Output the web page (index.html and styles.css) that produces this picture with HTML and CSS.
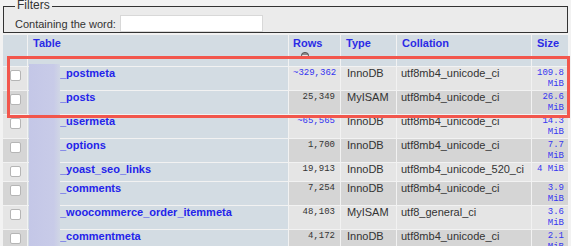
FILE: index.html
```html
<!DOCTYPE html>
<html lang="en">
<head>
<meta charset="utf-8">
<title>Tables</title>
<link rel="stylesheet" href="styles.css">
</head>
<body>
<div class="page">
  <fieldset class="filters">
    <legend>Filters</legend>
    <label class="filter-label">Containing the word: <input class="filter-input" type="text"></label>
  </fieldset>
  <table class="tbl">
    <thead>
      <tr>
        <th class="c-chk"></th>
        <th class="c-name"><a href="#">Table</a></th>
        <th class="c-rows"><a href="#">Rows</a>
          <span class="sort-icon"><svg width="8" height="7" viewBox="0 0 8 7"><ellipse cx="4" cy="3.5" rx="3.6" ry="3.1" fill="#8a8a8a" stroke="#444" stroke-width="0.8"/><rect x="1.2" y="3" width="5.6" height="1" fill="#e6e6e6"/></svg></span>
        </th>
        <th class="c-type"><a href="#">Type</a></th>
        <th class="c-coll"><a href="#">Collation</a></th>
        <th class="c-size"><a href="#">Size</a></th>
      </tr>
    </thead>
    <tbody>
      <tr class="odd">
        <td class="c-chk"><span class="chk"></span></td>
        <th class="c-name"><a href="#">_postmeta</a></th>
        <td class="c-rows"><a href="#">~329,362</a></td>
        <td class="c-type">InnoDB</td>
        <td class="c-coll">utf8mb4_unicode_ci</td>
        <td class="c-size"><a href="#">109.8 MiB</a></td>
      </tr>
      <tr class="even">
        <td class="c-chk"><span class="chk"></span></td>
        <th class="c-name"><a href="#">_posts</a></th>
        <td class="c-rows">25,349</td>
        <td class="c-type">MyISAM</td>
        <td class="c-coll">utf8mb4_unicode_ci</td>
        <td class="c-size"><a href="#">26.6 MiB</a></td>
      </tr>
      <tr class="odd">
        <td class="c-chk"><span class="chk"></span></td>
        <th class="c-name"><a href="#">_usermeta</a></th>
        <td class="c-rows"><a href="#">~65,565</a></td>
        <td class="c-type">InnoDB</td>
        <td class="c-coll">utf8mb4_unicode_ci</td>
        <td class="c-size"><a href="#">14.3 MiB</a></td>
      </tr>
      <tr class="even">
        <td class="c-chk"><span class="chk"></span></td>
        <th class="c-name"><a href="#">_options</a></th>
        <td class="c-rows">1,700</td>
        <td class="c-type">InnoDB</td>
        <td class="c-coll">utf8mb4_unicode_ci</td>
        <td class="c-size"><a href="#">7.7 MiB</a></td>
      </tr>
      <tr class="odd">
        <td class="c-chk"><span class="chk"></span></td>
        <th class="c-name"><a href="#">_yoast_seo_links</a></th>
        <td class="c-rows">19,913</td>
        <td class="c-type">InnoDB</td>
        <td class="c-coll">utf8mb4_unicode_520_ci</td>
        <td class="c-size"><a href="#">4&nbsp;MiB</a></td>
      </tr>
      <tr class="even">
        <td class="c-chk"><span class="chk"></span></td>
        <th class="c-name"><a href="#">_comments</a></th>
        <td class="c-rows">7,254</td>
        <td class="c-type">InnoDB</td>
        <td class="c-coll">utf8mb4_unicode_ci</td>
        <td class="c-size"><a href="#">3.9 MiB</a></td>
      </tr>
      <tr class="odd">
        <td class="c-chk"><span class="chk"></span></td>
        <th class="c-name"><a href="#">_woocommerce_order_itemmeta</a></th>
        <td class="c-rows">48,103</td>
        <td class="c-type">MyISAM</td>
        <td class="c-coll">utf8_general_ci</td>
        <td class="c-size"><a href="#">3.6 MiB</a></td>
      </tr>
      <tr class="even">
        <td class="c-chk"><span class="chk"></span></td>
        <th class="c-name"><a href="#">_commentmeta</a></th>
        <td class="c-rows">4,172</td>
        <td class="c-type">InnoDB</td>
        <td class="c-coll">utf8mb4_unicode_ci</td>
        <td class="c-size"><a href="#">2.1 MiB</a></td>
      </tr>
    </tbody>
  </table>
  <div class="redact"></div>
  <div class="highlight"></div>
</div>
</body>
</html>
```

FILE: styles.css
```css
html, body {
  margin: 0;
  padding: 0;
  background: #f2f2f2;
  font-family: "Liberation Sans", Arial, sans-serif;
  color: #333;
  overflow: hidden;
}

.page {
  position: relative;
  height: 246px;
  overflow: hidden;
}

.filters {
  margin: -1px 3px 0 3px;
  padding: 2px 11px 0 11px;
  border: 1px solid #333;
  background: #ebebeb;
}

.filters legend {
  font-size: 12px;
  line-height: 12px;
  padding: 0 2px 2px;
  color: #333;
}

.filter-label {
  display: flex;
  align-items: center;
  gap: 4px;
  font-size: 11px;
  color: #333;
}

.filter-input {
  width: 143px;
  height: 17px;
  box-sizing: border-box;
  margin: 0;
  border: 1px solid #d8d8d8;
  background: #fff;
  padding: 0;
}

.tbl {
  margin: 1px 0 0 2px;
  width: 567px;
  table-layout: fixed;
  border-collapse: separate;
  border-spacing: 1px;
  font-size: 11px;
}

.tbl th,
.tbl td {
  box-sizing: border-box;
  vertical-align: top;
  overflow: hidden;
}

.tbl thead th {
  background: #d3dce3;
  height: 31px;
  padding: 2px 5px 0 5px;
  text-align: left;
  font-weight: bold;
  line-height: 13px;
}

.tbl thead th a {
  color: #2b2be6;
  text-decoration: none;
}

.tbl thead .c-rows {
  padding-left: 4px;
}

.sort-icon {
  display: block;
  margin: 2px 0 0 8px;
  width: 8px;
  height: 7px;
}

.sort-icon svg {
  display: block;
}

.c-chk { width: 24px; }
.c-name { width: 260px; }
.c-rows { width: 51px; }
.c-type { width: 55px; }
.c-coll { width: 134px; }
.c-size { width: 36px; }

.tbl tbody td {
  padding: 0 4px;
  line-height: 13px;
  color: #333;
}

.tbl tbody tr.odd td { background: #e5e5e5; }
.tbl tbody tr.even td { background: #d5d5d5; }

.tbl tbody td.c-chk {
  padding: 0;
}

.chk {
  display: block;
  width: 11px;
  height: 11px;
  box-sizing: border-box;
  margin: 3px auto 4px;
  background: #fff;
  border: 1px solid #b5b5b5;
  border-radius: 2px;
}

.tbl tbody th.c-name {
  background: #d3dce3;
  text-align: left;
  padding: 0 4px 0 32px;
  font-weight: bold;
  line-height: 13px;
  white-space: nowrap;
}

.tbl tbody th.c-name a {
  color: #2424ea;
  text-decoration: none;
}

.tbl tbody td.c-rows {
  font-family: "Liberation Mono", "Courier New", monospace;
  font-size: 9px;
  line-height: 11px;
  text-align: right;
  padding: 1px 5px 0 4px;
}

.tbl tbody td.c-rows a {
  color: #3434f0;
  text-decoration: none;
}

.tbl tbody td.c-type {
  padding-left: 6px;
}

.tbl tbody td.c-coll {
  padding-left: 4px;
  white-space: nowrap;
}

.tbl tbody td.c-size {
  font-family: "Liberation Mono", "Courier New", monospace;
  font-size: 9px;
  line-height: 11px;
  text-align: right;
  padding: 1px 4px 0 2px;
}

.tbl tbody td.c-size a {
  color: #3636f0;
  text-decoration: none;
}

.redact {
  position: absolute;
  left: 29px;
  top: 64px;
  width: 31px;
  bottom: 0;
  background: linear-gradient(to right, #c4c7e7 0%, #c8cbe8 80%, #d0d6e5 100%);
}

.highlight {
  position: absolute;
  left: 7px;
  top: 56px;
  width: 563px;
  height: 62px;
  box-sizing: border-box;
  border: 3px solid #f2564c;
}
```
